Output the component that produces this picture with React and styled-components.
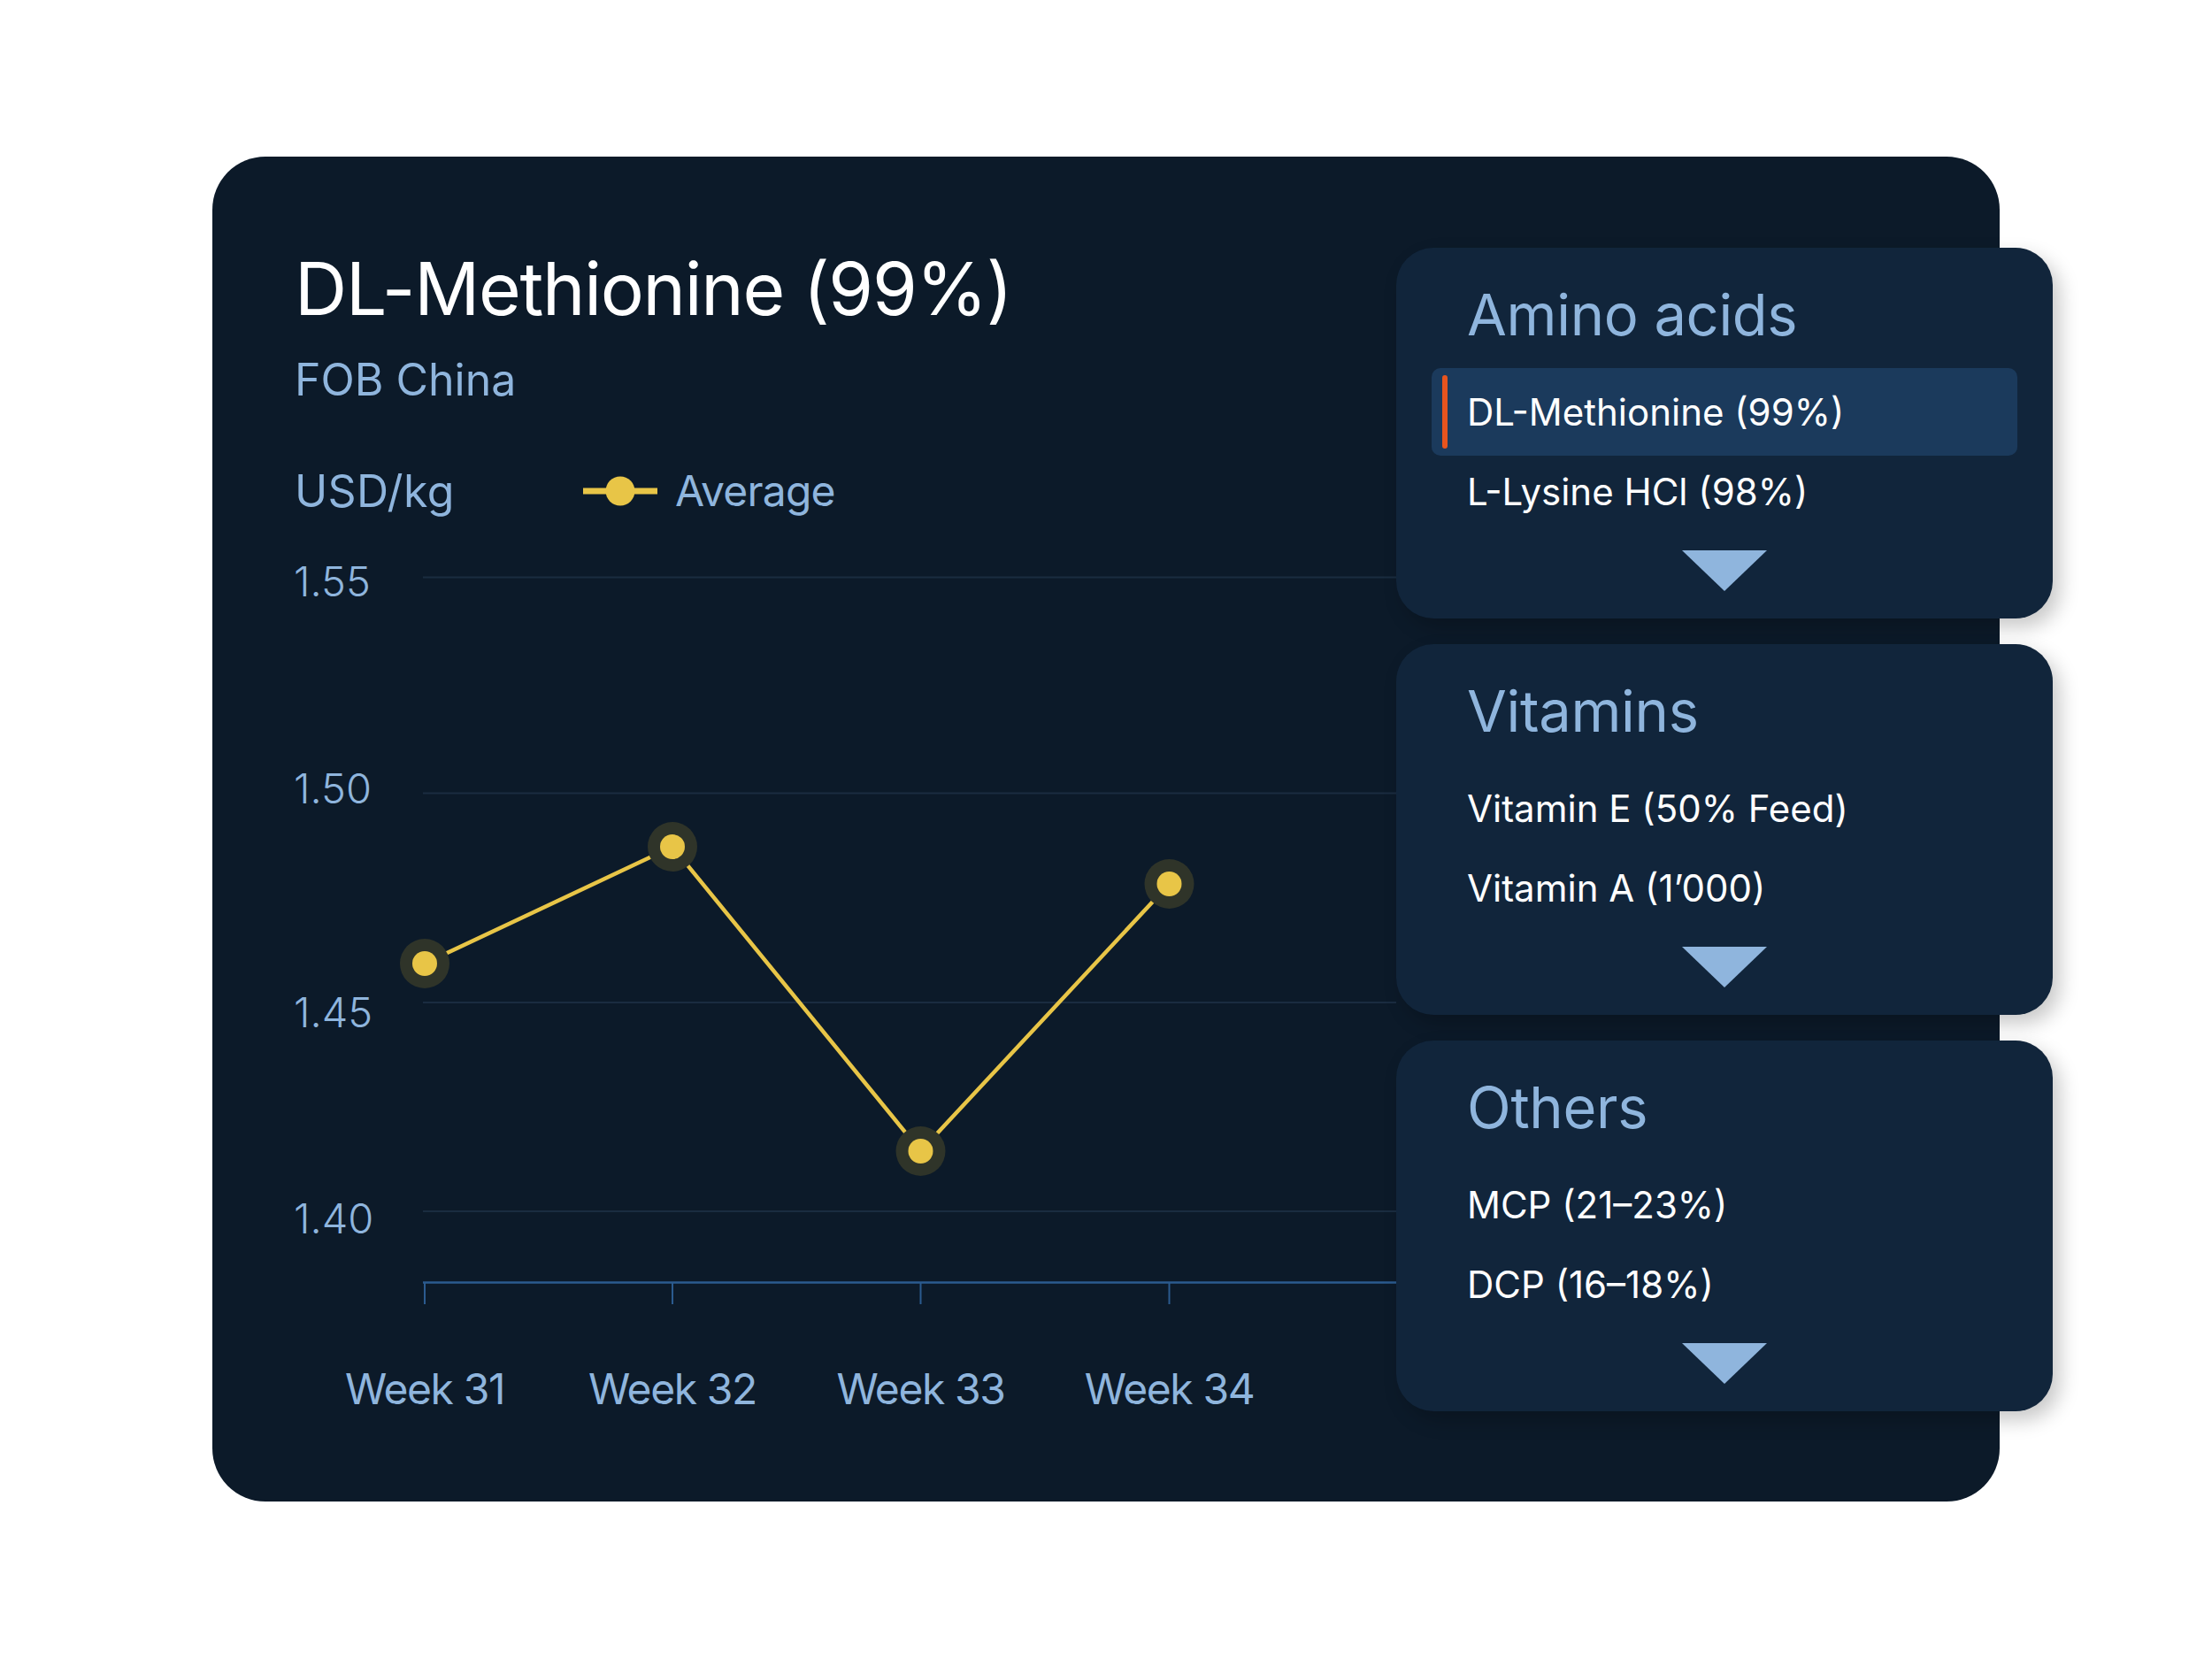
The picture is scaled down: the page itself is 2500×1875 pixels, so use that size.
import React from "react";
import styled, { createGlobalStyle } from "styled-components";

const GlobalStyle = createGlobalStyle`
  html, body { margin: 0; padding: 0; background: #ffffff; }
  * { box-sizing: border-box; }
`;

const BLUE = "#8fb5dd";
const YELLOW = "#e8c547";

const Page = styled.div`
  width: 2500px;
  height: 1875px;
  padding: 177px 0 0 240px;
  background: #ffffff;
  font-family: Inter, "Noto Sans", sans-serif;
`;

const Card = styled.div`
  width: 2020px;
  height: 1520px;
  border-radius: 60px;
  background: #0c1a29;
  display: flex;
  align-items: flex-start;
  padding: 103px 0 0 90px;
`;

const ChartColumn = styled.div`
  flex: 1;
  min-width: 0;
  display: flex;
  flex-direction: column;
  padding-top: 6px;
`;

const Title = styled.h1`
  margin: 0;
  padding-left: 3px;
  font-size: 82px;
  line-height: 1;
  font-weight: 400;
  color: #ffffff;
  letter-spacing: -1.3px;
`;

const Subtitle = styled.div`
  margin-top: 36px;
  padding-left: 3px;
  font-size: 50px;
  line-height: 1;
  color: ${BLUE};
`;

const LegendRow = styled.div`
  margin-top: 76px;
  display: flex;
  align-items: center;
  height: 50px;
`;

const Unit = styled.div`
  width: 329px;
  padding-left: 3px;
  font-size: 50px;
  line-height: 1;
  color: ${BLUE};
  letter-spacing: 0.4px;
`;

const LegendItem = styled.div`
  display: flex;
  align-items: center;
  gap: 20px;
  font-size: 48px;
  line-height: 1;
  color: ${BLUE};
  letter-spacing: -0.8px;
`;

const ChartSvg = styled.svg`
  display: block;
  margin-top: 22px;
  overflow: visible;
`;

const PanelColumn = styled.div`
  width: 742px;
  flex-shrink: 0;
  margin-right: -60px;
  display: flex;
  flex-direction: column;
  gap: 29px;
  position: relative;
  z-index: 1;
`;

const Panel = styled.section`
  height: 419px;
  border-radius: 42px;
  background: #11253b;
  padding-top: 43px;
  display: flex;
  flex-direction: column;
  box-shadow: 8px 10px 22px rgba(0, 0, 0, 0.22);
`;

const PanelTitle = styled.h2`
  margin: 0;
  padding-left: 80px;
  font-size: 65px;
  line-height: 1;
  font-weight: 400;
  color: ${BLUE};
  letter-spacing: -0.3px;
`;

const List = styled.div`
  margin-top: 32.5px;
  display: flex;
  flex-direction: column;
`;

const Row = styled.div`
  height: ${(p) => (p.$selected ? "99px" : "90px")};
  margin: ${(p) => (p.$selected ? "-4.5px 40px" : "0 40px")};
  padding-left: 12px;
  display: flex;
  align-items: center;
  border-radius: 10px;
  background: ${(p) => (p.$selected ? "#1b3a5c" : "transparent")};
`;

const Indicator = styled.span`
  width: 6px;
  height: 83px;
  border-radius: 3px;
  margin-right: 22px;
  background: ${(p) => (p.$selected ? "#e8541e" : "transparent")};
`;

const ItemText = styled.span`
  font-size: 42px;
  line-height: 1;
  color: #ffffff;
`;

const Chevron = styled.svg`
  display: block;
  align-self: center;
  margin-top: 21.5px;
`;

const gridTicks = [
  { label: "1.55", y: 50.6, baseline: 72.4 },
  { label: "1.50", y: 294.6, baseline: 305.7 },
  { label: "1.45", y: 531, baseline: 558.8 },
  { label: "1.40", y: 767, baseline: 792 },
];

const points = [
  { label: "Week 31", x: 150, y: 487 },
  { label: "Week 32", x: 430, y: 355 },
  { label: "Week 33", x: 710.5, y: 699 },
  { label: "Week 34", x: 991.5, y: 397 },
];

const groups = [
  {
    title: "Amino acids",
    items: ["DL-Methionine (99%)", "L-Lysine HCl (98%)"],
    selected: 0,
  },
  {
    title: "Vitamins",
    items: ["Vitamin E (50% Feed)", "Vitamin A (1’000)"],
    selected: -1,
  },
  {
    title: "Others",
    items: ["MCP (21–23%)", "DCP (16–18%)"],
    selected: -1,
  },
];

function Chart() {
  const W = 1248;
  const H = 1040;
  const axisY = 847.5;
  const path = points.map((p, i) => `${i ? "L" : "M"}${p.x} ${p.y}`).join(" ");
  return (
    <ChartSvg width={W} height={H} viewBox={`0 0 ${W} ${H}`}>
      {gridTicks.map((t) => (
        <g key={t.label}>
          <line x1={148} x2={W} y1={t.y} y2={t.y} stroke="#1a2c40" strokeWidth="2" />
          <text
            x={2}
            y={t.baseline}
            fill={BLUE}
            fontSize="47"
            fontWeight="300"
            fontFamily="Inter, 'Noto Sans', sans-serif"
          >
            {t.label}
          </text>
        </g>
      ))}
      <line x1={148} x2={W} y1={axisY} y2={axisY} stroke="#2b5b8f" strokeWidth="2.5" />
      {points.map((p) => (
        <line
          key={p.label + "t"}
          x1={p.x}
          x2={p.x}
          y1={axisY}
          y2={872}
          stroke="#2b5b8f"
          strokeWidth="2"
        />
      ))}
      <path d={path} fill="none" stroke={YELLOW} strokeWidth="4.5" strokeLinejoin="round" />
      {points.map((p) => (
        <g key={p.label}>
          <circle cx={p.x} cy={p.y} r="28" fill="#2f3429" />
          <circle cx={p.x} cy={p.y} r="14" fill={YELLOW} />
        </g>
      ))}
      {points.map((p) => (
        <text
          key={p.label + "l"}
          x={p.x}
          y={985}
          textAnchor="middle"
          fill={BLUE}
          fontSize="48"
          letterSpacing="-1.4"
          fontFamily="Inter, 'Noto Sans', sans-serif"
        >
          {p.label}
        </text>
      ))}
    </ChartSvg>
  );
}

function LegendIcon() {
  return (
    <svg width="84" height="34" viewBox="0 0 84 34">
      <rect x="0" y="13.5" width="84" height="7" fill={YELLOW} />
      <circle cx="42" cy="17" r="16.5" fill={YELLOW} />
    </svg>
  );
}

function CategoryPanel({ group }) {
  return (
    <Panel>
      <PanelTitle>{group.title}</PanelTitle>
      <List>
        {group.items.map((item, i) => (
          <Row key={item} $selected={i === group.selected}>
            <Indicator $selected={i === group.selected} />
            <ItemText>{item}</ItemText>
          </Row>
        ))}
      </List>
      <Chevron width="96" height="46" viewBox="0 0 96 46">
        <polygon points="0,0 96,0 48,46" fill={BLUE} />
      </Chevron>
    </Panel>
  );
}

export default function App() {
  return (
    <Page>
      <GlobalStyle />
      <Card>
        <ChartColumn>
          <Title>DL-Methionine (99%)</Title>
          <Subtitle>FOB China</Subtitle>
          <LegendRow>
            <Unit>USD/kg</Unit>
            <LegendItem>
              <LegendIcon />
              Average
            </LegendItem>
          </LegendRow>
          <Chart />
        </ChartColumn>
        <PanelColumn>
          {groups.map((g) => (
            <CategoryPanel key={g.title} group={g} />
          ))}
        </PanelColumn>
      </Card>
    </Page>
  );
}
